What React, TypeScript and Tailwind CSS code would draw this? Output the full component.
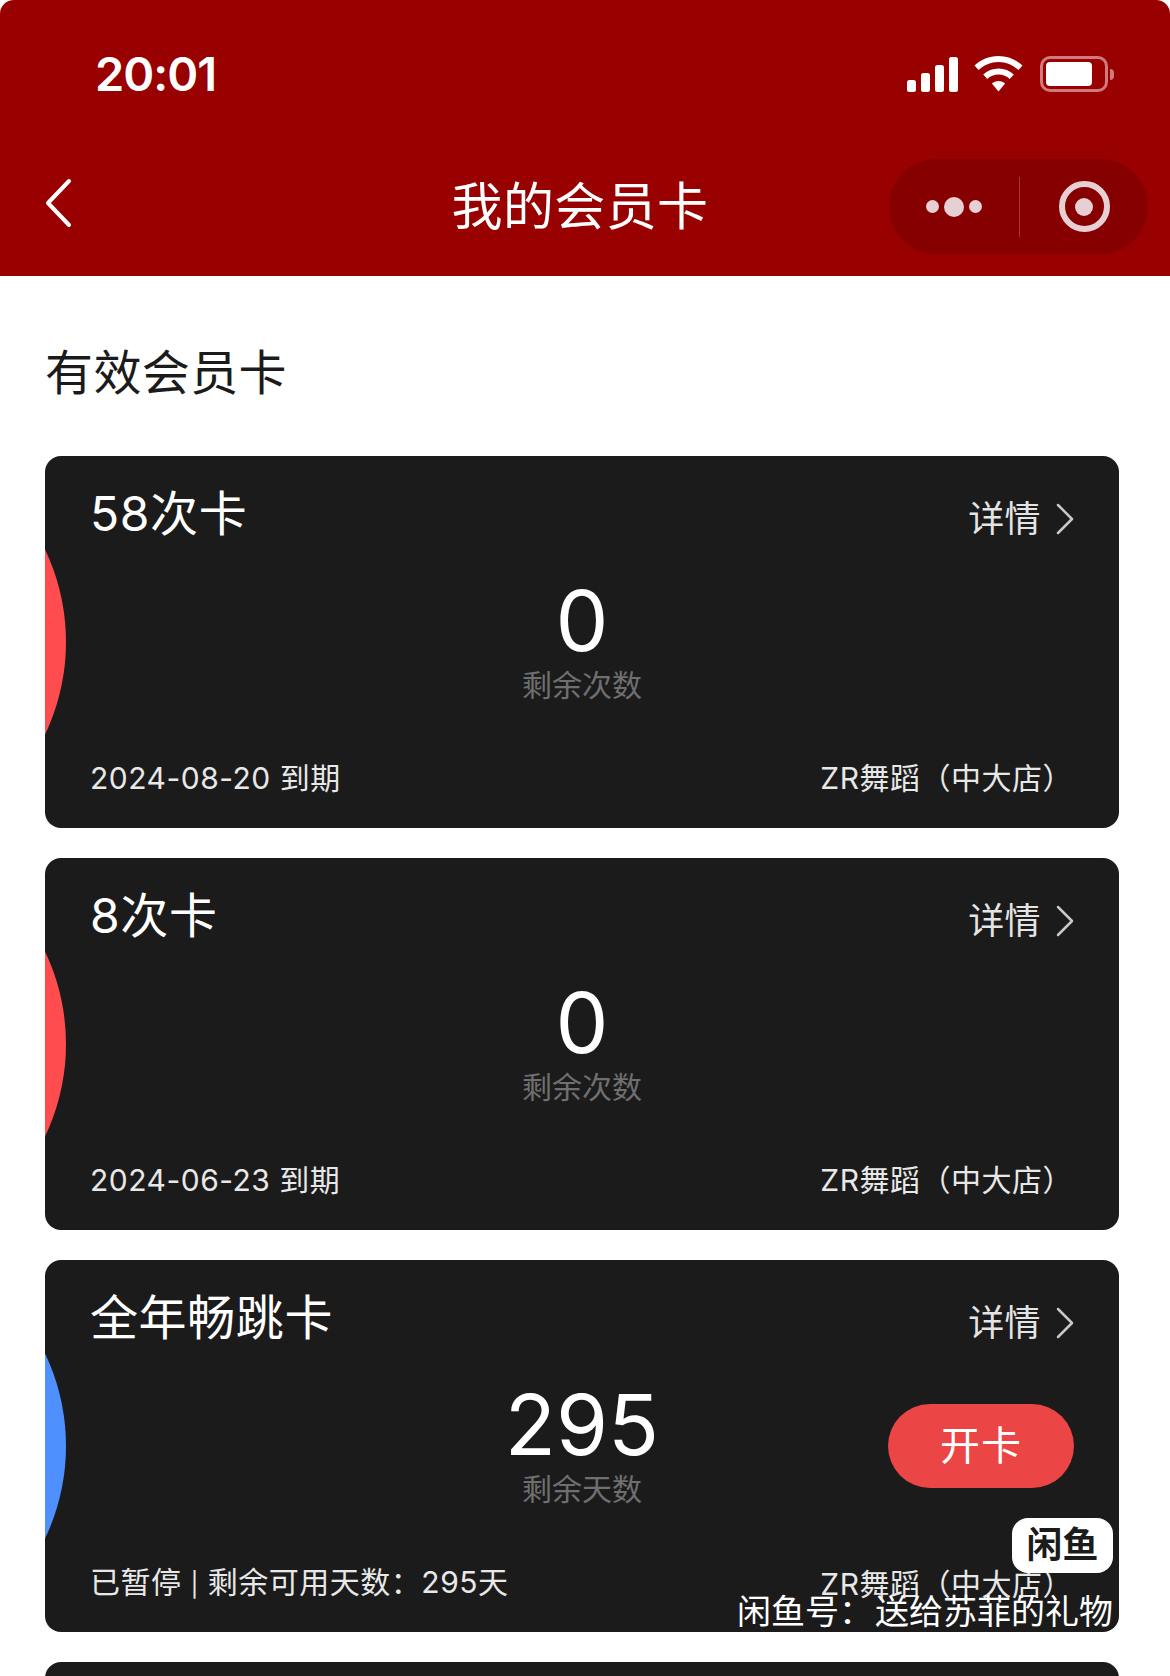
const cards = [
    { name: "58次卡", count: "0", label: "剩余次数", footer: <>2024-08-20 到期</>, arc: "bg-[#ff4d4f]" },
    { name: "8次卡", count: "0", label: "剩余次数", footer: <>2024-06-23 到期</>, arc: "bg-[#ff4d4f]" },
    { name: "全年畅跳卡", count: "295", label: "剩余天数", footer: <>已暂停 <span className="text-[24px]">|</span> 剩余可用天数：295天</>, arc: "bg-[#4d90fe]", open: true },
];

function StatusIcons() {
    return (
        <div className="flex items-center">
            <svg width="51" height="35" viewBox="0 0 51 35" fill="white">
                <rect x="0" y="23" width="9" height="12" rx="2.5" />
                <rect x="14" y="16" width="9" height="19" rx="2.5" />
                <rect x="28" y="8" width="9" height="27" rx="2.5" />
                <rect x="42" y="0" width="9" height="35" rx="2.5" />
            </svg>
            <svg className="ml-[16px]" width="49" height="36" viewBox="0 0 49 36" fill="white">
                <path d="M24.5 0C15 0 6.7 3.7 0.5 9.6L4.6 14C9.9 9.1 16.8 6 24.5 6S39.1 9.1 44.4 14L48.5 9.6C42.3 3.7 34 0 24.5 0Z" />
                <path d="M24.5 12.5C18.6 12.5 13.3 14.8 9.2 18.6L13.3 23C16.2 20.2 20.1 18.6 24.5 18.6S32.8 20.2 35.7 23L39.8 18.6C35.7 14.8 30.4 12.5 24.5 12.5Z" />
                <path d="M24.5 25C21.9 25 19.7 25.9 17.9 27.5L24.5 35.5L31.1 27.5C29.3 25.9 27.1 25 24.5 25Z" />
            </svg>
            <div className="ml-[17px] flex items-center">
                <div className="w-[68px] h-[36px] rounded-[10px] border-[3px] border-[#cf7a7d] p-[3px]">
                    <div className="w-[46px] h-full rounded-[4px] bg-white" />
                </div>
                <div className="ml-[2px] w-[4px] h-[11px] rounded-r-full bg-[#cf7a7d]" />
            </div>
        </div>
    );
}

function Capsule() {
    return (
        <div className="w-[259px] h-[95px] rounded-full bg-[#870000] flex items-center">
            <div className="w-[130px] flex items-center justify-center gap-[5px]">
                <div className="w-[13px] h-[13px] rounded-full bg-[#e6d0d3]" />
                <div className="w-[20px] h-[20px] rounded-full bg-[#e6d0d3]" />
                <div className="w-[13px] h-[13px] rounded-full bg-[#e6d0d3]" />
            </div>
            <div className="w-px h-[60px] bg-[#a43a3c]" />
            <div className="flex-1 flex items-center justify-center">
                <div className="w-[51px] h-[51px] rounded-full border-[6px] border-[#e6d0d3] flex items-center justify-center">
                    <div className="w-[18px] h-[18px] rounded-full bg-[#e6d0d3]" />
                </div>
            </div>
        </div>
    );
}

export default function App() {
    return (
        <div className="relative w-[1170px] h-[1676px] overflow-hidden bg-white font-['Inter','Noto_Sans_CJK_SC',sans-serif]">
            <div className="h-[276px] bg-[#990000] rounded-t-[14px] text-white">
                <div className="flex items-center justify-between pl-[95px] pr-[56px] h-[149px] pb-[1px]">
                    <span className="text-[47px] font-semibold leading-[52px] -tracking-[1px]">20:01</span>
                    <StatusIcons />
                </div>
                <div className="relative flex items-center justify-center h-[95px] mt-[10px]">
                    <svg className="absolute left-[44px] top-[19px]" width="30" height="50" viewBox="0 0 30 50" fill="none" stroke="white" strokeWidth="4" strokeLinecap="round" strokeLinejoin="round">
                        <path d="M25 3L4 25L25 47" />
                    </svg>
                    <span className="text-[51px] leading-[60px] pr-[10px] tracking-[0.4px]">我的会员卡</span>
                    <div className="absolute right-[22px] top-0">
                        <Capsule />
                    </div>
                </div>
            </div>

            <div className="pl-[45px] mt-[67px] text-[48px] leading-[60px] tracking-[0.4px] text-[#1b1b1b]">有效会员卡</div>

            <div className="mt-[53px] pl-[45px] pr-[51px] flex flex-col gap-[30px]">
                {cards.map((c) => (
                    <div key={c.name} className="relative h-[372px] rounded-[16px] bg-[#1b1b1b] overflow-hidden pl-[45px] pr-[45px] pt-[30px] text-white">
                        <div className={`absolute left-[-407px] top-[-28px] w-[428px] h-[428px] rounded-full ${c.arc}`} />
                        <div className="relative flex justify-between items-center h-[56px]">
                            <span className="text-[48px] leading-[56px] tracking-[0.6px]">{c.name}</span>
                            <span className="flex items-center text-[36px] leading-[44px] text-[#e4e4e4] mt-[9px] tracking-[0.4px]">
                                详情
                                <svg className="ml-[15px]" width="18" height="32" viewBox="0 0 18 32" fill="none" stroke="#c8c8c8" strokeWidth="2.5" strokeLinecap="round" strokeLinejoin="round">
                                    <path d="M2 2L16 16L2 30" />
                                </svg>
                            </span>
                        </div>
                        <div className="relative grid grid-cols-[1fr_auto_1fr] mt-[37px]">
                            <div />
                            <div className="flex flex-col items-center">
                                <span className="text-[84px] leading-[84px] font-normal">{c.count}</span>
                                <span className="text-[30px] leading-[40px] text-[#6f6f6f] mt-[2px]">{c.label}</span>
                            </div>
                            {c.open ? (
                                <div className="justify-self-end mt-[21px] w-[186px] h-[84px] rounded-full bg-[#ec4545] flex items-center justify-center text-[40px] tracking-[1px]">开卡</div>
                            ) : <div />}
                        </div>
                        <div className="absolute left-[45px] right-[46px] top-[302px] flex justify-between items-center text-[30px] leading-[40px] tracking-[0.5px] text-[#e8e8e8]">
                            <span className="whitespace-pre">{c.footer}</span>
                            <span>ZR舞蹈（中大店）</span>
                        </div>
                    </div>
                ))}
                <div className="h-[372px] rounded-[16px] bg-[#1b1b1b]" />
            </div>

            {/* watermark */}
            <div className="absolute left-[1012px] top-[1518px] w-[101px] h-[55px] rounded-[16px] bg-white flex items-center justify-center text-[36px] leading-[55px] font-semibold text-[#1b1b1b]">闲鱼</div>
            <div className="absolute left-[737px] top-[1592px] text-[34px] leading-[40px] whitespace-nowrap text-white">闲鱼号：<span className="ml-[2px]">送给苏菲的礼物</span></div>
        </div>
    );
}
